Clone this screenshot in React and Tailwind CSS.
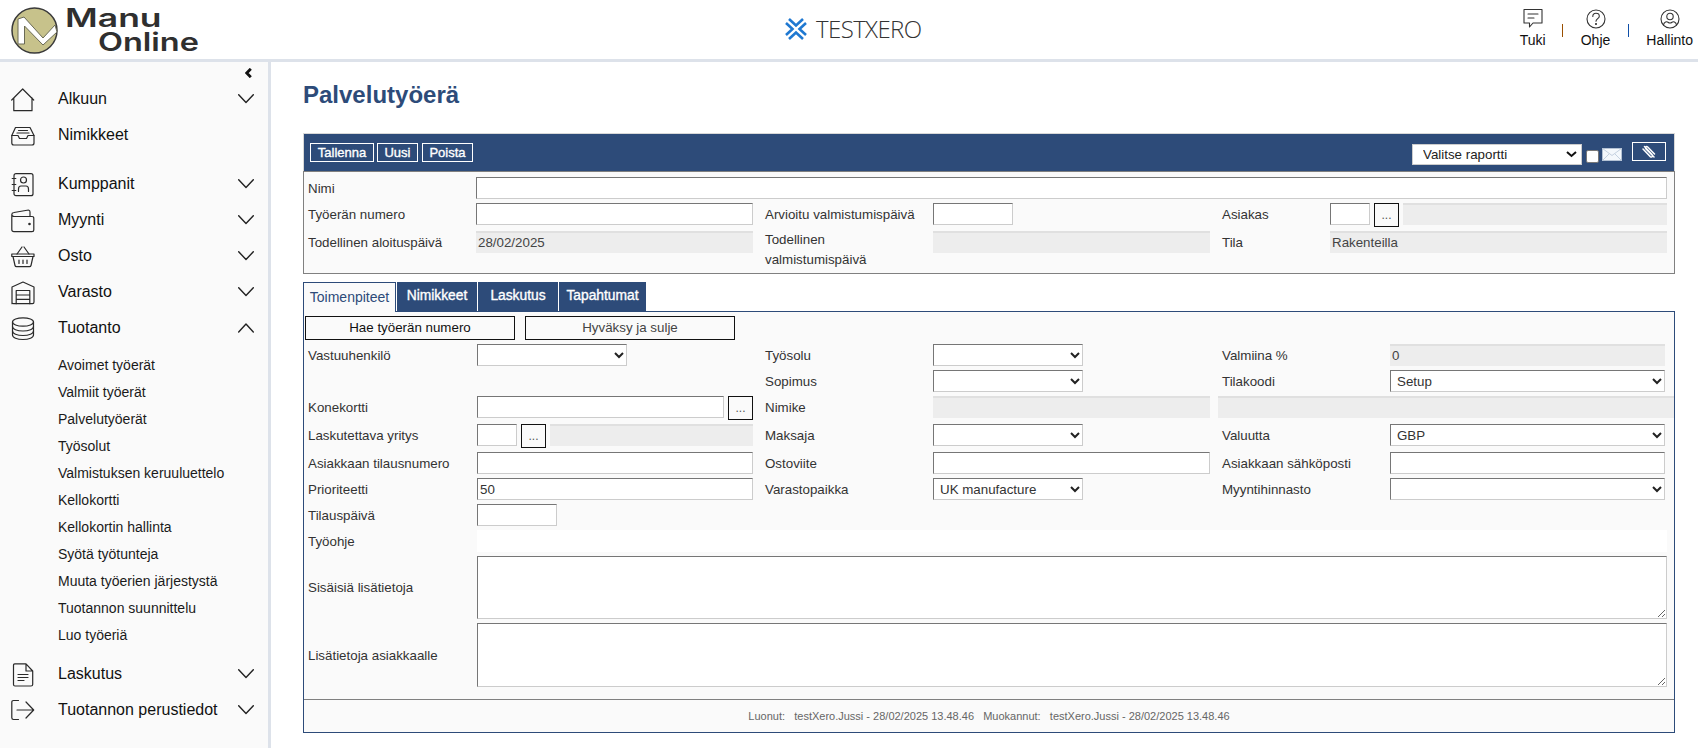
import React from "react";

const S = ({ children, w = 24, h = 24, sw = 1.2, className = "" }) => (
  <svg width={w} height={h} viewBox={`0 0 ${w} ${h}`} fill="none" stroke="currentColor" strokeWidth={sw} strokeLinecap="round" strokeLinejoin="round" className={className}>
    {children}
  </svg>
);

const Down = () => (
  <S w={16} h={10} sw={1.4}><path d="M0.7 0.7 L8 8.6 L15.3 0.7" /></S>
);
const Up = () => (
  <S w={16} h={10} sw={1.4}><path d="M0.7 9 L8 1.1 L15.3 9" /></S>
);

const Home = () => <S><path d="M0.7 12 L11.7 1 L22.7 12 M2.8 9.8 V22.7 H21 V9.8" /></S>;
const Tray = () => (
  <S>
    <g transform="translate(0 1.5)">
      <path d="M4.5 2 H19 L23 10 V17.5 Q23 19.5 21 19.5 H2.8 Q0.8 19.5 0.8 17.5 V10 Z" />
      <path d="M0.8 10 H7 L8.5 13 H15.5 L17 10 H23 M7.5 5 H16.5 M6 7.5 H18" />
    </g>
  </S>
);
const Contact = () => (
  <S>
    <rect x="3" y="0.7" width="19" height="22" rx="2" />
    <path d="M1.2 5.5 H4.8 M1.2 11.5 H4.8 M1.2 17.5 H4.8" />
    <circle cx="12.5" cy="7" r="3" />
    <path d="M7.5 18.5 V16 Q7.5 13 10 13 H15 Q17.5 13 17.5 16 V18.5" />
  </S>
);
const Wallet = () => (
  <S>
    <path d="M0.8 6 V20.5 Q0.8 22.7 3 22.7 H21 Q22.8 22.7 22.8 21 V9.5 Q22.8 7.5 21 7.5 H3.5 Q0.8 7.5 0.8 5.5 Q0.8 3.8 3 3.5 L17.5 1 Q19 1 19 3 V7.5" />
    <circle cx="18.5" cy="15" r="0.7" fill="currentColor" />
  </S>
);
const Basket = () => (
  <S>
    <g transform="translate(0 1)">
      <path d="M0.8 8 H23 V10.5 H0.8 Z" />
      <path d="M2 10.5 L4 19.5 Q4.3 20.7 5.5 20.7 H18.5 Q19.7 20.7 20 19.5 L22 10.5" />
      <path d="M6 8 L11 1 M18 8 L13 1 M8 14 V17.5 M12 14 V17.5 M16 14 V17.5" />
    </g>
  </S>
);
const Warehouse = () => (
  <S>
    <path d="M1 22.7 V6 L12 1 L23 6 V21 Q23 22.7 21.5 22.7 H2.5 Q1 22.7 1 21 Z" />
    <path d="M5.2 22.7 V9.5 H18.8 V22.7 M5.2 14 H18.8 M5.2 18.4 H18.8" />
  </S>
);
const Db = () => (
  <S>
    <ellipse cx="12" cy="5" rx="10.5" ry="4.2" />
    <path d="M1.5 5 V18 C1.5 20.5 6 22.5 12 22.5 S22.5 20.5 22.5 18 V5" />
    <path d="M1.5 9.5 C1.5 12 6 14 12 14 S22.5 12 22.5 9.5 M1.5 14 C1.5 16.5 6 18.5 12 18.5 S22.5 16.5 22.5 14" />
  </S>
);
const FileIcon = () => (
  <S>
    <path d="M3.8 0.8 H15 L21.7 8 V21.5 Q21.7 23 20 23 H4 Q2.5 23 2.5 21.5 V2.5 Q2.5 0.8 3.8 0.8 Z M15 0.8 V8 H21.7" />
    <path d="M7 11.5 H17 M7 14.5 H17 M7 17.5 H13" />
  </S>
);
const Exit = () => (
  <S>
    <path d="M7.5 1.5 H2.5 Q0.8 1.5 0.8 3.2 V18.8 Q0.8 20.5 2.5 20.5 H7.5" />
    <path d="M6 11 H22.5 M15 3 L22.7 11 L15 19" />
  </S>
);

const Logo = () => (
  <div className="flex items-start ml-[11px] mt-[7px]">
    <svg width="48" height="48" viewBox="0 0 48 48" className="shrink-0">
      <circle cx="23.5" cy="23.5" r="22.5" fill="#c7c28b" stroke="#3a3a3a" strokeWidth="1.5" />
      <path d="M7 37 V12 L13 10 L32 31 L44 18 L46 25 L32 38 L13.5 19 V37 Z" fill="#ffffff" stroke="#6a6a55" strokeWidth="1" />
    </svg>
    <div className="ml-[6px] [font-family:Inter,sans-serif] font-semibold text-[#2f2f2f]">
      <div className="text-[25px] leading-[24px] -mt-[1px] origin-left scale-x-[1.42]">Manu</div>
      <div className="text-[25px] leading-[24px] ml-[33px] origin-left scale-x-[1.3]">Online</div>
    </div>
  </div>
);

const XeroMark = () => (
  <svg width="22" height="22" viewBox="0 0 22 22" fill="none" stroke="#1f78d1" strokeWidth="2.6" strokeLinecap="butt">
    <path d="M4 1 L11 7.5 L18 1" />
    <path d="M1 5 L7.5 11 L1 17" />
    <path d="M21 5 L14.5 11 L21 17" />
    <path d="M4 21 L11 14.5 L18 21" />
  </svg>
);

const HeadItem = ({ icon, label }) => (
  <div className="flex flex-col items-center text-[14px] leading-[16px] text-[#111]">
    <div className="h-[22px] text-[#333]">{icon}</div>
    <div className="mt-[2px]">{label}</div>
  </div>
);

const Header = () => (
  <header className="relative h-[62px] shrink-0 bg-white border-b-[3px] border-[#dde2ea] flex items-start">
    <div className="w-[400px]"><Logo /></div>
    <div className="absolute left-[785px] top-[17px] flex items-center">
      <XeroMark />
      <span className="ml-[9px] text-[24px] leading-[24px] text-[#333] font-light [font-family:Open_Sans,sans-serif] tracking-[-0.6px]">TESTXERO</span>
    </div>
    <div className="ml-auto flex items-start pt-[8px]">
      <HeadItem label="Tuki" icon={
        <S w={20} h={22} sw={1.1}><path d="M1 1.5 H19 V15 H10 L6.5 19 V15 H1 Z M5 6 H15 M5 10 H11" /></S>
      } />
      <div className="w-px h-[13px] bg-[#9a4f00] ml-[16px] mt-[16px]" />
      <div className="ml-[18px]">
        <HeadItem label="Ohje" icon={
          <S w={20} h={22} sw={1.1}><circle cx="10" cy="11" r="9" /><path d="M6.8 8.5 C6.8 6.5 8.2 5.3 10 5.3 C12 5.3 13.3 6.6 13.3 8.2 C13.3 10.5 10 10.8 10 13.2" /><circle cx="10" cy="16" r="0.5" fill="currentColor" /></S>
        } />
      </div>
      <div className="w-px h-[13px] bg-[#0f4fa8] ml-[18px] mt-[16px]" />
      <div className="ml-[17px] mr-[5px]">
        <HeadItem label="Hallinto" icon={
          <S w={20} h={22} sw={1.1}><circle cx="10" cy="11" r="9" /><circle cx="10" cy="8.5" r="3.2" /><path d="M3.5 17 C4 13.5 7 13.5 8 14.2 C9 15 11 15 12 14.2 C13 13.5 16 13.5 16.5 17" /></S>
        } />
      </div>
    </div>
  </header>
);

const NavItem = ({ icon, label, chevron }) => (
  <div className="flex items-center h-[36px] pl-[11px] pr-[14px] text-[16px] text-[#111]">
    <div className="w-[24px] h-[24px] mt-[3px] text-[#2a2a2a]">{icon}</div>
    <span className="ml-[23px] pt-[2px]">{label}</span>
    <span className="ml-auto mt-[2px] text-[#222] flex">{chevron === "up" ? <Up /> : chevron === "down" ? <Down /> : null}</span>
  </div>
);

const subs = ["Avoimet työerät", "Valmiit työerät", "Palvelutyöerät", "Työsolut", "Valmistuksen keruuluettelo", "Kellokortti", "Kellokortin hallinta", "Syötä työtunteja", "Muuta työerien järjestystä", "Tuotannon suunnittelu", "Luo työeriä"];

const Sidebar = () => (
  <aside className="w-[271px] shrink-0 bg-[#fafafa] border-r-[3px] border-[#dde2ea] flex flex-col">
    <div className="h-[18px] flex justify-end pr-[16px] pt-[6px]">
      <svg width="7" height="10" viewBox="0 0 7 10" fill="none" stroke="#111" strokeWidth="2.8"><path d="M5.8 0.8 L1.8 5 L5.8 9.2" /></svg>
    </div>
    <NavItem icon={<Home />} label="Alkuun" chevron="down" />
    <NavItem icon={<Tray />} label="Nimikkeet" />
    <div className="h-[13px]" />
    <NavItem icon={<Contact />} label="Kumppanit" chevron="down" />
    <NavItem icon={<Wallet />} label="Myynti" chevron="down" />
    <NavItem icon={<Basket />} label="Osto" chevron="down" />
    <NavItem icon={<Warehouse />} label="Varasto" chevron="down" />
    <NavItem icon={<Db />} label="Tuotanto" chevron="up" />
    <div className="mt-[7px] mb-[6px] pl-[58px]">
      {subs.map((s) => (
        <div key={s} className="h-[27px] flex items-center text-[14px] text-[#1a1a1a]">{s}</div>
      ))}
    </div>
    <NavItem icon={<FileIcon />} label="Laskutus" chevron="down" />
    <NavItem icon={<Exit />} label="Tuotannon perustiedot" chevron="down" />
  </aside>
);

const Label = ({ children, className = "" }) => (
  <div className={`h-[22px] flex items-center pt-[2px] text-[13.33px] text-[#333] ${className}`}>{children}</div>
);

const field = "block h-[22px] bg-white border border-t-[#767676] border-l-[#767676] border-r-[#cccccc] border-b-[#cccccc] text-[13.33px] text-[#333] px-[2px] pt-[1px] outline-none rounded-none";

const Input = ({ className = "w-full", value = "" }) => (
  <input readOnly value={value} className={`${field} ${className}`} />
);

const Disabled = ({ className = "w-full", value = "" }) => (
  <div className={`h-[22px] bg-[#ededed] border-t-2 border-[#e0e0e0] text-[13.33px] text-[#444] pl-[2px] leading-[20px] ${className}`}>{value}</div>
);

const Select = ({ className = "w-[150px]", value = "" }) => (
  <div className={`relative ${className}`}>
    <select defaultValue={value} className={`${field} w-full appearance-none pl-[6px]`}>
      <option value={value}>{value}</option>
    </select>
    <svg className="absolute right-[3px] top-[8px] pointer-events-none" width="10" height="7" viewBox="0 0 10 7" fill="none" stroke="#222" strokeWidth="2"><path d="M1 1 L5 5 L9 1" /></svg>
  </div>
);

const Dots = () => (
  <button className="w-[25px] h-[24px] shrink-0 bg-[#fafafa] border border-[#111] text-[12px] leading-[20px] text-[#555]">...</button>
);

const ToolBtn = ({ children, className = "" }) => (
  <button className={`h-[19px] border border-white text-white [-webkit-text-stroke:0.35px_#fff] text-[13px] leading-[15px] flex items-center justify-center ${className}`}>{children}</button>
);

const Toolbar = () => (
  <div className="h-[38px] bg-[#2d4b79] border border-b-0 border-[#d8d8d8] flex items-start pl-[6px] pr-[8px] pt-[9px]">
    <ToolBtn className="w-[64px]">Tallenna</ToolBtn>
    <ToolBtn className="w-[41px] ml-[3px]">Uusi</ToolBtn>
    <ToolBtn className="w-[51px] ml-[4px]">Poista</ToolBtn>
    <div className="ml-auto flex items-start">
      <div className="relative w-[170px] mt-[1px]">
        <select defaultValue="r" className="block w-full h-[21px] bg-white appearance-none border border-[#ccc] text-[13.33px] text-[#222] pl-[10px] rounded-none">
          <option value="r">Valitse raportti</option>
        </select>
        <svg className="absolute right-[5px] top-[7px] pointer-events-none" width="11" height="7" viewBox="0 0 11 7" fill="none" stroke="#111" strokeWidth="2"><path d="M1 1 L5.5 5 L10 1" /></svg>
      </div>
      <div className="w-[13px] h-[13px] bg-white border border-[#777] rounded-[2px] ml-[4px] mt-[7px]" />
      <svg className="ml-[3px] mt-[5px]" width="20" height="13" viewBox="0 0 20 13" fill="#f4f8fc" stroke="#b8c6d8" strokeWidth="0.8"><rect x="0.4" y="0.4" width="19.2" height="12.2" /><path d="M0.4 0.4 L10 7.5 L19.6 0.4 M0.4 12.6 L7 6 M19.6 12.6 L13 6" fill="none" /></svg>
      <button className="ml-[10px] w-[34px] h-[19px] border border-white flex items-center justify-center -mt-px">
        <svg width="14" height="14" viewBox="0 0 14 14" fill="none" stroke="#fff" strokeWidth="1.5" strokeLinecap="round"><path d="M12.5 12 L4.5 4 C3 2.5 4.8 0.8 6.2 2 L13 9 M3 1.5 L10.5 9.5 C12 11 10.5 13 8.8 11.6 L1.5 4" transform="translate(-0.5 0)" /></svg>
      </button>
    </div>
  </div>
);

const TopForm = () => (
  <div className="border border-[#808080] bg-[#fafafa] pt-[5px] pb-[3px]">
    <div className="grid grid-cols-[172px_277px_180px_277px_120px_337px] gap-y-1 items-start">
      <Label className="pl-[4px]">Nimi</Label>
      <div className="col-span-5"><Input /></div>

      <Label className="pl-[4px]">Työerän numero</Label>
      <Input />
      <Label className="pl-[12px]">Arvioitu valmistumispäivä</Label>
      <Input className="w-[80px]" />
      <Label className="pl-[12px]">Asiakas</Label>
      <div className="flex gap-1">
        <Input className="w-[40px]" />
        <Dots />
        <Disabled className="flex-1" />
      </div>

      <Label className="pl-[4px]">Todellinen aloituspäivä</Label>
      <Disabled value="28/02/2025" />
      <div className="pl-[12px] text-[13.33px] leading-[20px] text-[#333] -mt-px">Todellinen<br />valmistumispäivä</div>
      <Disabled />
      <Label className="pl-[12px]">Tila</Label>
      <Disabled value="Rakenteilla" />
    </div>
  </div>
);

const tabClass = "h-[29px] bg-[#2d4b79] text-white [-webkit-text-stroke:0.35px_#fff] text-[13.8px] flex items-center justify-center";

const Tabs = () => (
  <div className="flex gap-px mt-[8px] h-[30px] relative z-10">
    <div className="w-[93px] h-[30px] bg-[#fafafa] border border-b-0 border-[#2d4b79] text-[#2d4b79] text-[14px] flex items-center justify-center">Toimenpiteet</div>
    <div className={`w-[80px] ${tabClass}`}>Nimikkeet</div>
    <div className={`w-[80px] ${tabClass}`}>Laskutus</div>
    <div className={`w-[87px] ${tabClass}`}>Tapahtumat</div>
  </div>
);

const ActionPanel = () => (
  <div className="-mt-px border border-[#2d4b79] bg-[#fafafa]">
    <div className="flex gap-[10px] pt-[4px] ml-px">
      <button className="w-[210px] h-[24px] border border-[#111] text-[13.33px] text-[#111] bg-[#fafafa]">Hae työerän numero</button>
      <button className="w-[210px] h-[24px] border border-[#111] text-[13.33px] text-[#444] bg-[#fafafa]">Hyväksy ja sulje</button>
    </div>
    <div className="grid grid-cols-[173px_276px_180px_277px_180px_284px] gap-y-1 items-start mt-[4px]">
      <Label className="pl-[4px]">Vastuuhenkilö</Label>
      <Select />
      <Label className="pl-[12px]">Työsolu</Label>
      <Select />
      <Label className="pl-[12px]">Valmiina %</Label>
      <Disabled className="w-[275px]" value="0" />

      <div />
      <div />
      <Label className="pl-[12px]">Sopimus</Label>
      <Select />
      <Label className="pl-[12px]">Tilakoodi</Label>
      <Select className="w-[275px]" value="Setup" />

      <Label className="pl-[4px]">Konekortti</Label>
      <div className="flex gap-1">
        <Input className="flex-1 min-w-0" />
        <Dots />
      </div>
      <Label className="pl-[12px]">Nimike</Label>
      <Disabled />
      <div className="col-span-2 pl-[8px]"><Disabled /></div>

      <Label className="pl-[4px]">Laskutettava yritys</Label>
      <div className="flex gap-1">
        <Input className="w-[40px]" />
        <Dots />
        <Disabled className="flex-1" />
      </div>
      <Label className="pl-[12px]">Maksaja</Label>
      <Select />
      <Label className="pl-[12px]">Valuutta</Label>
      <Select className="w-[275px]" value="GBP" />

      <Label className="pl-[4px]">Asiakkaan tilausnumero</Label>
      <Input />
      <Label className="pl-[12px]">Ostoviite</Label>
      <Input />
      <Label className="pl-[12px]">Asiakkaan sähköposti</Label>
      <Input className="w-[275px]" />

      <Label className="pl-[4px]">Prioriteetti</Label>
      <Input value="50" />
      <Label className="pl-[12px]">Varastopaikka</Label>
      <Select value="UK manufacture" />
      <Label className="pl-[12px]">Myyntihinnasto</Label>
      <Select className="w-[275px]" />
    </div>
    <div className="grid grid-cols-[173px_1190px] gap-y-1 items-center mt-1">
      <Label className="pl-[4px]">Tilauspäivä</Label>
      <Input className="w-[80px]" />

      <Label className="pl-[4px]">Työohje</Label>
      <div className="h-[22px] bg-white" />

      <Label className="pl-[4px] -mt-[1px]">Sisäisiä lisätietoja</Label>
      <textarea readOnly className="block w-full h-[63px] bg-white border border-t-[#767676] border-l-[#767676] border-r-[#cccccc] border-b-[#cccccc] outline-none" />

      <Label className="pl-[4px] -mt-[1px]">Lisätietoja asiakkaalle</Label>
      <textarea readOnly className="block w-full h-[64px] bg-white border border-t-[#767676] border-l-[#767676] border-r-[#cccccc] border-b-[#cccccc] outline-none" />
    </div>
    <div className="mt-[12px] border-t border-[#808080] h-[33px] flex items-center justify-center text-[11px] text-[#666] whitespace-pre">
      {"Luonut:   testXero.Jussi - 28/02/2025 13.48.46   Muokannut:   testXero.Jussi - 28/02/2025 13.48.46"}
    </div>
  </div>
);

export default function App() {
  return (
    <div className="h-screen flex flex-col bg-white overflow-hidden [font-family:Liberation_Sans,Arial,sans-serif]">
      <Header />
      <div className="flex flex-1 min-h-0">
        <Sidebar />
        <main className="flex-1 pl-[32px] pr-[23px]">
          <h1 className="mt-[17px] mb-[22px] text-[24px] leading-[32px] font-bold text-[#2d4b79]">Palvelutyöerä</h1>
          <Toolbar />
          <TopForm />
          <Tabs />
          <ActionPanel />
        </main>
      </div>
    </div>
  );
}
